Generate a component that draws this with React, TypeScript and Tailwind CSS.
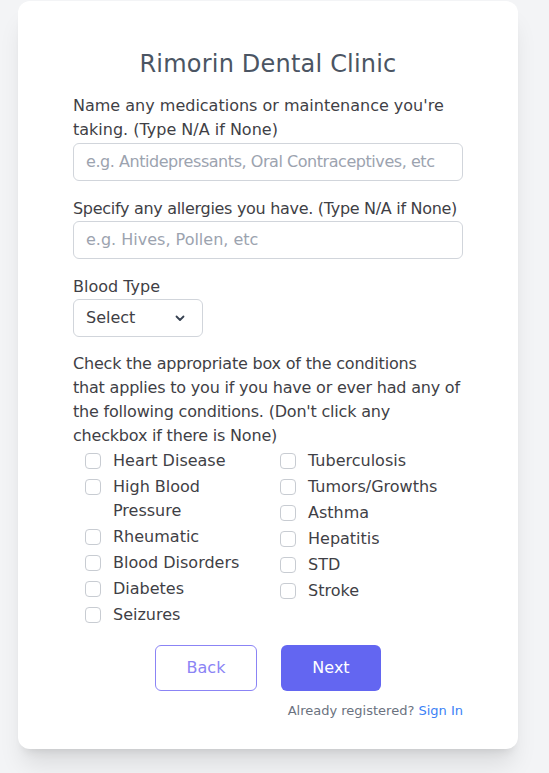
import React from "react";

const left = ["Heart Disease", "High Blood Pressure", "Rheumatic", "Blood Disorders", "Diabetes", "Seizures"];
const right = ["Tuberculosis", "Tumors/Growths", "Asthma", "Hepatitis", "STD", "Stroke"];

function Item({ label }: { label: string }) {
  return (
    <label className="flex items-start gap-3 pl-3 leading-6 text-[16px] text-[#3f3f46]">
      <span className="mt-[4px] w-4 h-4 shrink-0 rounded-[4px] border border-[#c8ccd2] bg-white" />
      <span>{label}</span>
    </label>
  );
}

export default function App() {
  return (
    <div
      className="min-h-[773px] w-[549px] bg-[#f3f4f6] pt-px"
      style={{ fontFamily: '"DejaVu Sans", "Noto Sans", sans-serif' }}
    >
      <div className="ml-[18px] w-[500px] rounded-xl bg-white shadow-xl px-[55px] pt-[47px] pb-[28px]">
        <h1 className="text-center text-[24px] leading-8 text-[#4b5563] tracking-[0.2px]">Rimorin Dental Clinic</h1>

        <div className="mt-[14px] text-[16px] leading-6 text-[#3f3f46]">
          Name any medications or maintenance you're
          <br />
          taking. (Type N/A if None)
        </div>
        <div className="mt-px h-[38px] rounded-md border border-[#d1d5db] px-3 flex items-center text-[16px] text-[#9ca3af] whitespace-nowrap overflow-hidden tracking-[-0.45px]">
          e.g. Antidepressants, Oral Contraceptives, etc
        </div>

        <div className="mt-4 text-[16px] leading-6 text-[#3f3f46] whitespace-nowrap tracking-[-0.3px]">
          Specify any allergies you have. (Type N/A if None)
        </div>
        <div className="h-[38px] rounded-md border border-[#d1d5db] px-3 flex items-center text-[16px] text-[#9ca3af]">
          e.g. Hives, Pollen, etc
        </div>

        <div className="mt-4 text-[16px] leading-6 text-[#3f3f46]">Blood Type</div>
        <div className="h-[38px] w-[130px] rounded-md border border-[#d1d5db] pl-3 pr-4 flex items-center justify-between text-[16px] text-[#3f3f46]">
          <span>Select</span>
          <svg width="12" height="12" viewBox="0 0 12 12" fill="none" stroke="#374151" strokeWidth="1.8" strokeLinecap="round" strokeLinejoin="round">
            <path d="M2.5 4.5 6 8l3.5-3.5" />
          </svg>
        </div>

        <p className="mt-[15px] text-[16px] leading-6 text-[#3f3f46] whitespace-nowrap tracking-[-0.2px]">
          Check the appropriate box of the conditions
          <br />
          that applies to you if you have or ever had any of
          <br />
          the following conditions. (Don't click any
          <br />
          checkbox if there is None)
        </p>

        <div className="grid grid-cols-2 mt-px">
          <div className="flex flex-col gap-[2px]">
            {left.map((l) => (
              <Item key={l} label={l} />
            ))}
          </div>
          <div className="flex flex-col gap-[2px]">
            {right.map((l) => (
              <Item key={l} label={l} />
            ))}
          </div>
        </div>

        <div className="mt-[18px] flex justify-center gap-6">
          <button className="h-[46px] w-[102px] rounded-md border border-[#8b84f5] bg-white text-[16px] text-[#8b84f5]">
            Back
          </button>
          <button className="h-[46px] w-[100px] rounded-md bg-[#6366f1] text-[16px] text-white">
            Next
          </button>
        </div>

        <div className="mt-[10px] text-right text-[13px] leading-5 text-[#6b7280]">
          Already registered? <span className="text-[#3b82f6]">Sign In</span>
        </div>
      </div>
    </div>
  );
}
